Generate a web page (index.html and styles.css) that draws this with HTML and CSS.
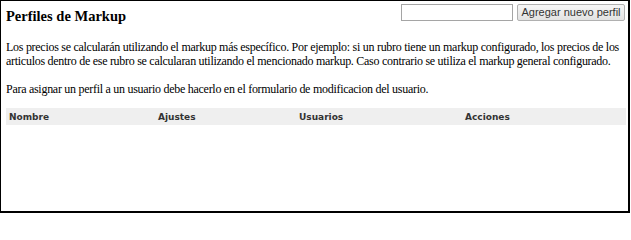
FILE: index.html
```html
<!DOCTYPE html>
<html lang="es">
<head>
<meta charset="utf-8">
<title>Perfiles de Markup</title>
<link rel="stylesheet" href="styles.css">
</head>
<body>
<div class="frame">
  <div class="head">
    <h1 class="title">Perfiles de Markup</h1>
    <form class="add-form">
      <input class="name-input" type="text">
      <button class="add-btn" type="button">Agregar nuevo perfil</button>
    </form>
  </div>
  <p class="text">Los precios se calcularán utilizando el markup más específico. Por ejemplo: si un rubro tiene un markup configurado, los precios de los articulos dentro de ese rubro se calcularan utilizando el mencionado markup. Caso contrario se utiliza el markup general configurado.</p>
  <p class="text text-last">Para asignar un perfil a un usuario debe hacerlo en el formulario de modificacion del usuario.</p>
  <table class="grid">
    <colgroup>
      <col class="c1"><col class="c2"><col class="c3"><col class="c4">
    </colgroup>
    <thead>
      <tr><th>Nombre</th><th>Ajustes</th><th>Usuarios</th><th>Acciones</th></tr>
    </thead>
  </table>
</div>
</body>
</html>
```

FILE: styles.css
```css
html, body {
  margin: 0;
  padding: 0;
  background: #fff;
}
.frame {
  box-sizing: border-box;
  width: 630px;
  height: 213px;
  border-style: solid;
  border-color: #000;
  border-width: 1px 2px 2px 1px;
  padding: 3px 3px 0 5px;
  font-family: "Liberation Serif", "Times New Roman", serif;
  color: #000;
}
.head {
  display: flex;
  justify-content: space-between;
  align-items: flex-start;
  height: 36px;
}
.title {
  margin: 3px 0 0 0;
  font-size: 14.5px;
  font-weight: bold;
  line-height: 18px;
}
.add-form {
  display: flex;
  gap: 4px;
  margin: 0;
}
.name-input {
  box-sizing: border-box;
  width: 112px;
  height: 17px;
  margin: 0;
  border: 1px solid #a5a5a5;
  padding: 0 2px;
  background: #fff;
}
.add-btn {
  box-sizing: border-box;
  width: 108px;
  height: 17px;
  margin: 0;
  padding: 0;
  border: 1px solid #b0b0b0;
  border-radius: 2px;
  background: linear-gradient(#f6f6f6, #e2e2e2);
  font-family: "Liberation Sans", Arial, sans-serif;
  font-size: 11px;
  color: #333;
  line-height: 15px;
}
.text {
  margin: 0 0 14px 0;
  font-size: 12px;
  line-height: 14px;
  letter-spacing: -0.28px;
}
.text-last {
  margin-bottom: 12px;
}
.grid {
  width: 620px;
  border-collapse: collapse;
  table-layout: fixed;
}
.c1 { width: 149px; }
.c2 { width: 141px; }
.c3 { width: 166px; }
.c4 { width: 164px; }
.grid th {
  background: #efefef;
  text-align: left;
  font-family: "DejaVu Sans", Verdana, sans-serif;
  font-weight: bold;
  font-size: 9px;
  color: #333;
  height: 17px;
  padding: 0 0 0 3px;
}
```
